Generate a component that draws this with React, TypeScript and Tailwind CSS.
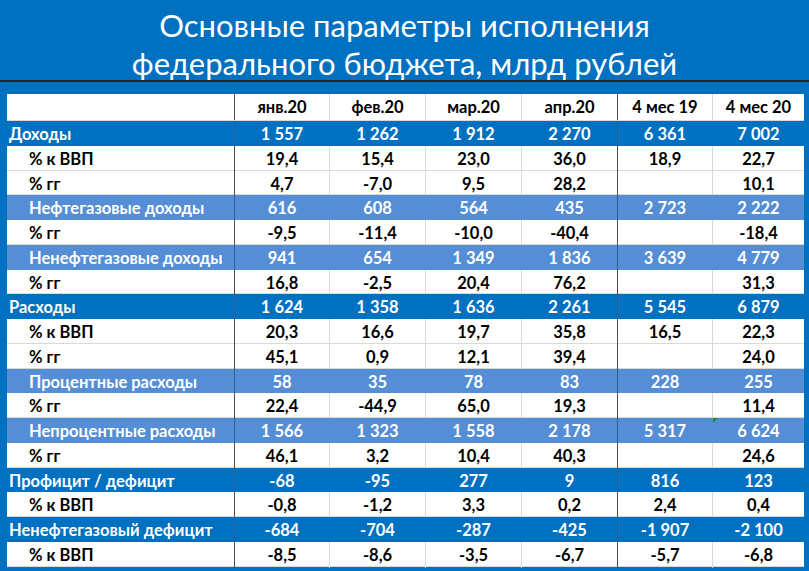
import React from "react";

type Row = {
    label: string;
    kind: "main" | "sub" | "plain";
    values: string[];
};

const rows: Row[] = [
    { label: "Доходы", kind: "main", values: ["1 557", "1 262", "1 912", "2 270", "6 361", "7 002"] },
    { label: "% к ВВП", kind: "plain", values: ["19,4", "15,4", "23,0", "36,0", "18,9", "22,7"] },
    { label: "% гг", kind: "plain", values: ["4,7", "-7,0", "9,5", "28,2", "", "10,1"] },
    { label: "Нефтегазовые доходы", kind: "sub", values: ["616", "608", "564", "435", "2 723", "2 222"] },
    { label: "% гг", kind: "plain", values: ["-9,5", "-11,4", "-10,0", "-40,4", "", "-18,4"] },
    { label: "Ненефтегазовые доходы", kind: "sub", values: ["941", "654", "1 349", "1 836", "3 639", "4 779"] },
    { label: "% гг", kind: "plain", values: ["16,8", "-2,5", "20,4", "76,2", "", "31,3"] },
    { label: "Расходы", kind: "main", values: ["1 624", "1 358", "1 636", "2 261", "5 545", "6 879"] },
    { label: "% к ВВП", kind: "plain", values: ["20,3", "16,6", "19,7", "35,8", "16,5", "22,3"] },
    { label: "% гг", kind: "plain", values: ["45,1", "0,9", "12,1", "39,4", "", "24,0"] },
    { label: "Процентные расходы", kind: "sub", values: ["58", "35", "78", "83", "228", "255"] },
    { label: "% гг", kind: "plain", values: ["22,4", "-44,9", "65,0", "19,3", "", "11,4"] },
    { label: "Непроцентные расходы", kind: "sub", values: ["1 566", "1 323", "1 558", "2 178", "5 317", "6 624"] },
    { label: "% гг", kind: "plain", values: ["46,1", "3,2", "10,4", "40,3", "", "24,6"] },
    { label: "Профицит / дефицит", kind: "main", values: ["-68", "-95", "277", "9", "816", "123"] },
    { label: "% к ВВП", kind: "plain", values: ["-0,8", "-1,2", "3,3", "0,2", "2,4", "0,4"] },
    { label: "Ненефтегазовый дефицит", kind: "main", values: ["-684", "-704", "-287", "-425", "-1 907", "-2 100"] },
    { label: "% к ВВП", kind: "plain", values: ["-8,5", "-8,6", "-3,5", "-6,7", "-5,7", "-6,8"] },
];

const headers = ["янв.20", "фев.20", "мар.20", "апр.20", "4 мес 19", "4 мес 20"];

const gridCols = "grid grid-cols-[227px_95px_96px_96px_96px_95px_92px]";

const Budget = () => {
    return (
        <div className="w-[809px] h-[571px] bg-[#0070c0] overflow-hidden font-['Lato',sans-serif]">
            <div className="h-[80px] flex flex-col items-center justify-center text-white text-[31px] leading-[38px] pt-[8px]">
                <div>Основные параметры исполнения</div>
                <div>федерального бюджета, млрд рублей</div>
            </div>
            <div className="h-[2px] bg-[#1b2733]" />

            <div className="mt-[12px] mx-[7px] w-[797px] font-bold text-[16.5px]">
                {/* header */}
                <div className={`${gridCols} h-[27px] bg-white text-black border-b border-[#d9d9d9]`}>
                    <div />
                    {headers.map((h, i) => (
                        <div
                            key={h}
                            className={`flex items-center justify-center border-l ${i === 0 || i === 4 ? "border-[#4d4d4d]" : "border-[#d9d9d9]"}`}
                        >
                            {h}
                        </div>
                    ))}
                </div>

                {rows.map((row, r) => {
                    const bg =
                        row.kind === "main"
                            ? "bg-[#0070c0] text-white"
                            : row.kind === "sub"
                              ? "bg-[#558ed5] text-white"
                              : "bg-white text-black border-b border-[#d9d9d9]";
                    const pad = row.kind === "main" ? "pl-[2px]" : "pl-[22px]";
                    return (
                        <div key={r} className={`${gridCols} h-[24.75px] ${bg} relative`}>
                            <div className={`flex items-center ${pad} pt-[1px] whitespace-nowrap`}>{row.label}</div>
                            {row.values.map((v, i) => {
                                const dark = i === 0 || i === 4;
                                const line =
                                    row.kind === "plain"
                                        ? dark
                                            ? "border-[#4d4d4d]"
                                            : "border-[#d9d9d9]"
                                        : dark
                                          ? "border-[#2f5f8f]"
                                          : "border-transparent";
                                return (
                                    <div key={i} className={`flex items-center justify-center pt-[1px] border-l ${line} relative`}>
                                        {v}
                                        {r === 12 && i === 5 && (
                                            <span className="absolute left-0 top-0 w-0 h-0 border-t-[5px] border-r-[5px] border-t-[#1e8a3a] border-r-transparent" />
                                        )}
                                    </div>
                                );
                            })}
                        </div>
                    );
                })}
            </div>
        </div>
    );
};

export default function App() {
    return <Budget />;
}
